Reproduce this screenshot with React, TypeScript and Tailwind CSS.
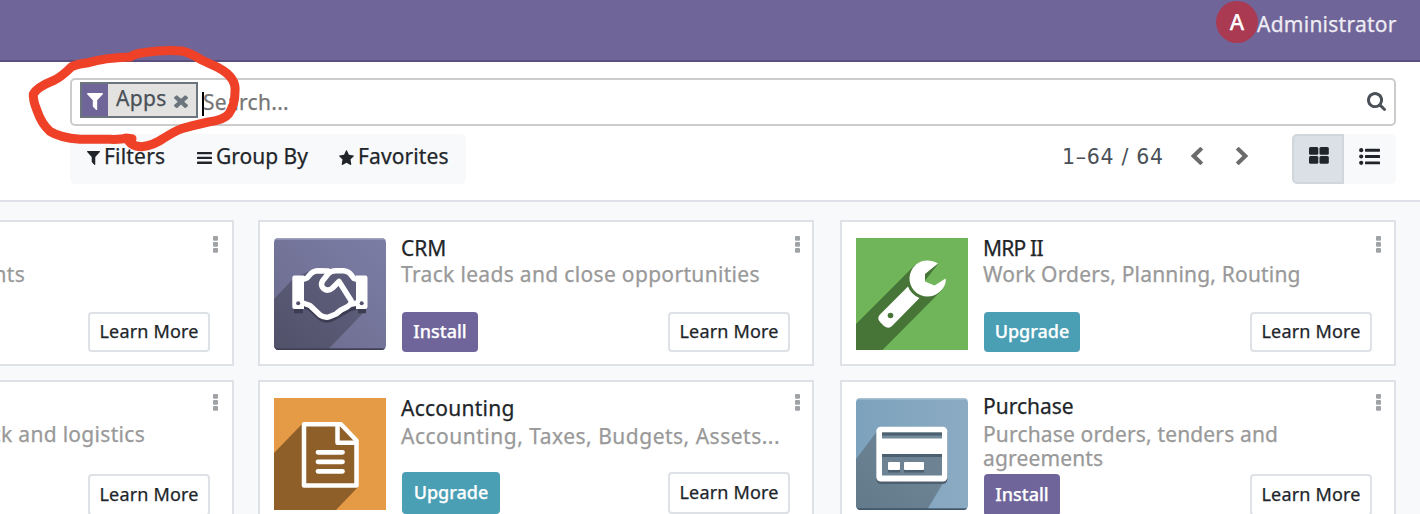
import React from "react";

type IconProps = { className: string; box: string; d: string };

function Icon({ className, box, d }: IconProps) {
  return (
    <svg viewBox={box} className={`shrink-0 ${className}`} fill="currentColor" preserveAspectRatio="none" aria-hidden="true">
      <path d={d} />
    </svg>
  );
}

const FILTER = "M1595 295q17 41-14 70l-493 493v742q0 42-39 59-13 5-25 5-27 0-45-19l-256-256q-19-19-19-45V858L211 365q-31-29-14-70 17-39 59-39h1280q42 0 59 39z";
const FILTER_BOX = "192 256 1408 1408";
const TIMES = "M1490 1322q0 40-28 68l-136 136q-28 28-68 28t-68-28l-294-294-294 294q-28 28-68 28t-68-28l-136-136q-28-28-28-68t28-68l294-294-294-294q-28-28-28-68t28-68l136-136q28-28 68-28t68 28l294 294 294-294q28-28 68-28t68 28l136 136q28 28 28 68t-28 68l-294 294 294 294q28 28 28 68z";
const STAR = "M1728 647q0 22-26 48l-363 354 86 500q1 7 1 20 0 21-10.5 35.5T1385 1619q-19 0-40-12l-449-236-449 236q-22 12-40 12-21 0-31.5-14.5T365 1569q0-6 2-20l86-500L89 695q-25-27-25-48 0-37 56-46l502-73L847 73q19-41 49-41t49 41l225 455 502 73q56 9 56 46z";
const SEARCH = "M1216 832q0-185-131.5-316.5T768 384 451.5 515.5 320 832t131.5 316.5T768 1280t316.5-131.5T1216 832zm512 832q0 52-38 90t-90 38q-54 0-90-38l-343-342q-179 124-399 124-143 0-273.5-55.5t-225-150-150-225T64 832t55.5-273.5 150-225 225-150T768 128t273.5 55.5 225 150 150 225T1472 832q0 220-124 399l343 343q37 37 37 90z";
const LEFT = "M1427 301l-531 531 531 531q19 19 19 45t-19 45l-166 166q-19 19-45 19t-45-19L429 877q-19-19-19-45t19-45l742-742q19-19 45-19t45 19l166 166q19 19 19 45t-19 45z";
const RIGHT = "M1363 877l-742 742q-19 19-45 19t-45-19l-166-166q-19-19-19-45t19-45l531-531-531-531q-19-19-19-45t19-45l166-166q19-19 45-19t45 19l742 742q19 19 19 45t-19 45z";

function Bars() {
  return (
    <svg viewBox="0 0 15 12" className="h-3 w-[15px] shrink-0" fill="currentColor" aria-hidden="true">
      <rect width="15" height="2.3" rx="0.6" />
      <rect y="4.8" width="15" height="2.3" rx="0.6" />
      <rect y="9.6" width="15" height="2.3" rx="0.6" />
    </svg>
  );
}

function CrmIcon() {
  return (
    <svg viewBox="0 0 112 112" className="size-28 shrink-0">
      <defs>
        <linearGradient id="crm" x1="0" y1="1" x2="1" y2="0">
          <stop offset="0" stopColor="#6a6b8b" />
          <stop offset="1" stopColor="#7c7da6" />
        </linearGradient>
        <linearGradient id="crmShade" x1="0" y1="1" x2="1" y2="0">
          <stop offset="0" stopColor="#51516a" />
          <stop offset="1" stopColor="#60607f" />
        </linearGradient>
        <clipPath id="crmClip"><rect width="112" height="112" rx="4.5" /></clipPath>
      </defs>
      <g clipPath="url(#crmClip)">
        <rect width="112" height="112" fill="url(#crm)" />
        <path d="M0 61 20 40 36 33 44 31 70 32 84 40 93 71 53.500 112H0Z" fill="url(#crmShade)" />
        <rect width="112" height="1.600" fill="#a2a3bf" />
        <rect y="110.300" width="112" height="1.700" fill="#3f4056" />
        <g transform="translate(0 2.500)" stroke="#3c3d52" strokeWidth="5.500" fill="none" strokeLinejoin="round">
          <path d="M29 65 36 67.500 46 77Q52 81.500 59 77.500L68 72.500 76 68 83 66M20 70h9M84 70h8" />
        </g>
        <g fill="none" stroke="#fff" strokeWidth="5.500" strokeLinejoin="round" strokeLinecap="round">
          <path d="M29 41.500 33 40 37 35.500Q40 32.700 44 32.700L54 33" />
          <path d="M83 41.500 80 40.500 76 35.500Q73 32.700 69 32.700H62Q57 32.700 54 36L48.500 43Q46 47 49.500 50.500 54 54 58.500 50L65 43.500 77 62.500Q78 66 73 69L67 72 62 76 56 78.500Q51 80.500 46 77L36 67.500 29 65M78 66 83 65" />
        </g>
        <path d="M20.500 37.500H30V71H20.500Q18.300 71 18.300 69V39.500Q18.300 37.500 20.500 37.500ZM82 37.500h9.300Q93.500 37.500 93.500 39.500V69Q93.500 71 91.300 71H82Z" fill="#fff" />
        <circle cx="24.200" cy="65.300" r="2" fill="#51526b" />
        <circle cx="87.700" cy="65.300" r="2" fill="#51526b" />
      </g>
    </svg>
  );
}

function AccountingIcon() {
  return (
    <svg viewBox="0 0 112 112" className="size-28 shrink-0">
      <rect width="112" height="112" fill="#e59b46" />
      <path d="M0 55 29 25H67L84 43V89L62 112H0Z" fill="#8f5f2a" />
      <path d="M30 26.300H67L82.500 42.500V87.500H30Z" fill="none" stroke="#fff" strokeWidth="4.500" strokeLinejoin="round" />
      <path d="M63.500 27V44.800H82" fill="none" stroke="#fff" strokeWidth="4.500" strokeLinejoin="round" />
      <path d="M44 54.300H68.500M44 63.800H68.500M44 73.300H68.500" stroke="#fff" strokeWidth="4.800" strokeLinecap="round" />
    </svg>
  );
}

function WrenchIcon() {
  return (
    <svg viewBox="0 0 112 112" className="size-28 shrink-0">
      <rect width="112" height="112" fill="#70b55a" />
      <path d="M0 86 59 27 82 26 68 44 86 52 26.500 112H0Z" fill="#477538" />
      <path d="M82 25.500C75 21.500 66 21 59.500 27 52 34 51.500 45 58 52.500 65 60 76 60.500 83.500 54 88.500 49.500 90.500 44.500 89.500 40.500L78.500 47.500 69 43.500V36Z" fill="#fff" />
      <path d="M52 48.500Q55 56.500 63.500 60L36 88Q32.500 91.500 28 88L24 84Q20.500 80 24 76.500Z" fill="#fff" />
      <circle cx="34.500" cy="77.500" r="2.800" fill="#477538" />
    </svg>
  );
}

function PurchaseIcon() {
  return (
    <svg viewBox="0 0 112 112" className="size-28 shrink-0">
      <defs>
        <linearGradient id="buy" x1="0" x2="1">
          <stop offset="0" stopColor="#7da2bd" />
          <stop offset="1" stopColor="#8babc2" />
        </linearGradient>
        <linearGradient id="buyShade" x1="0" y1="1" x2="1" y2="0">
          <stop offset="0" stopColor="#637a8b" />
          <stop offset="1" stopColor="#71889a" />
        </linearGradient>
        <clipPath id="buyClip"><rect width="112" height="112" rx="4.500" /></clipPath>
      </defs>
      <g clipPath="url(#buyClip)">
        <rect width="112" height="112" fill="url(#buy)" />
        <path d="M0 61 22 32 90 80 71 112H0Z" fill="url(#buyShade)" />
        <rect width="112" height="1.600" fill="#a8c0d1" />
        <rect y="110.300" width="112" height="1.700" fill="#41576a" />
        <rect x="20.300" y="31" width="71" height="55" rx="4.500" fill="#4d606f" />
        <rect x="20.300" y="28.700" width="71" height="54.800" rx="4.500" fill="#fff" />
        <rect x="26" y="34.500" width="60" height="6" fill="#738a9a" />
        <rect x="26" y="34.500" width="60" height="3" fill="#4d606f" />
        <rect x="26" y="56" width="60" height="21.500" fill="#6d8393" />
        <rect x="26" y="56" width="60" height="3" fill="#4d606f" />
        <rect x="32" y="66.500" width="12" height="8" rx="1" fill="#4d606f" />
        <rect x="48" y="66.500" width="20" height="8" rx="1" fill="#4d606f" />
        <rect x="32" y="64" width="12" height="8" rx="1" fill="#fff" />
        <rect x="48" y="64" width="20" height="8" rx="1" fill="#fff" />
      </g>
    </svg>
  );
}

function Kebab({ className }: { className: string }) {
  return (
    <svg viewBox="0 0 5 17" className={`ml-auto h-[17px] w-[5px] shrink-0 ${className}`} fill="#a0a3a6">
      <rect width="5" height="4.700" rx="1" />
      <rect y="6" width="5" height="4.700" rx="1" />
      <rect y="12" width="5" height="4.700" rx="1" />
    </svg>
  );
}

type CardProps = {
  icon?: React.ReactNode;
  title?: string;
  subtitle: React.ReactNode;
  action?: { label: string; className: string };
  titleClass?: string;
  subtitleClass?: string;
  rowClass: string;
  kebabClass: string;
  buttonClass: string;
  className?: string;
};

function Card({ icon, title, subtitle, action, titleClass = "", subtitleClass = "", rowClass, kebabClass, buttonClass, className = "" }: CardProps) {
  return (
    <article className={`flex h-[146px] w-[556px] shrink-0 border-2 border-[#dee1e6] bg-white pr-3 pl-[14px] pt-4 ${className}`}>
      {icon ?? <div className="size-28 shrink-0" />}
      <div className="ml-4 w-[388px] shrink-0">
        <div className={`-ml-px h-[25px] text-[21px] leading-[26px] text-[#212529] ${titleClass}`}>{title}</div>
        <div className={`-ml-px text-[21px] leading-6 whitespace-nowrap text-[#999] ${subtitleClass}`}>{subtitle}</div>
        <div className={`flex items-start justify-between ${rowClass}`}>
          {action ? (
            <button className={`rounded-[4px] pb-0.5 text-[18px] font-medium text-white ${buttonClass} ${action.className}`}>{action.label}</button>
          ) : (
            <span />
          )}
          <button className={`w-[122px] rounded-[4px] border-2 border-[#dee2e6] pb-0.5 text-[18px] tracking-[0.16px] text-[#212529] ${buttonClass}`}>Learn More</button>
        </div>
      </div>
      <Kebab className={kebabClass} />
    </article>
  );
}

export default function App() {
  return (
    <div className="relative h-[514px] w-[1420px] overflow-hidden bg-[#f8f9fb] font-['Noto_Sans',sans-serif] [-webkit-text-stroke:0.25px_currentColor]">
      <header className="flex h-[62px] items-start justify-end border-b-2 border-[#5a4f7f] bg-[#706599] pr-6">
        <div className="mt-[1px] flex size-[42px] items-center justify-center rounded-full bg-[#a93a51] pb-0.5 text-[22px] font-medium text-white">A</div>
        <span className="mt-3 -ml-[1px] w-[139px] text-[21px] leading-6 tracking-[0.25px] text-[#eeecf3]">Administrator</span>
      </header>

      <section className="h-[140px] border-b-2 border-[#dee1e8] bg-white pt-4 pr-6 pl-[70px]">
        <div className="flex h-12 items-start rounded-[5px] border-2 border-[#ccc] pl-2">
          <div className="mt-[2px] flex h-9 w-[118px] items-start border-2 border-[#6c757d] bg-[#e2e2e0]">
            <div className="flex h-8 w-[26px] justify-center bg-[#706599] pt-[9px] text-white">
              <Icon className="h-[17px] w-4" box={FILTER_BOX} d={FILTER} />
            </div>
            <span className="ml-2 w-[50px] text-[21px] leading-7 tracking-[0.3px] text-[#495057]">Apps</span>
            <Icon className="mt-[10px] ml-2 h-[14px] w-[14px] text-[#6c757d]" box="302 238 1188 1316" d={TIMES} />
          </div>
          <div className="mt-3 ml-1 h-6 w-[2px] bg-black" />
          <span className="mt-[9px] -ml-px text-[21px] leading-[26px] tracking-[0.3px] text-[#757575]">Search...</span>
          <Icon className="mt-3 mr-2 ml-auto size-[19px] text-[#495057]" box="64 128 1664 1664" d={SEARCH} />
        </div>

        <div className="mt-2 flex h-[50px] items-start">
          <nav className="flex h-[50px] w-[396px] rounded-[5px] bg-[#f8f9fb] pl-[17px] text-[21px] leading-[26px] text-[#212529]">
            <div className="flex w-[110px] pt-[9px] tracking-[0.2px]">
              <Icon className="mt-2 mr-1 h-[14px] w-[13px]" box={FILTER_BOX} d={FILTER} />
              Filters
            </div>
            <div className="flex w-[142px] pt-[9px]">
              <span className="mt-[9px] mr-1 flex items-start"><Bars /></span>
              Group By
            </div>
            <div className="flex pt-[9px] tracking-[0.12px]">
              <Icon className="mt-[7px] mr-1 h-[15px] w-[15px]" box="64 32 1664 1587" d={STAR} />
              Favorites
            </div>
          </nav>
          <div className="ml-auto flex items-start">
            <span className="mt-2.5 w-[129px] font-['DejaVu_Sans',sans-serif] text-[20.500px] leading-[26px] tracking-[0.700px] whitespace-nowrap text-[#495057] [-webkit-text-stroke:0]">1–64 / 64</span>
            <Icon className="mt-[13px] h-[18px] w-3 text-[#6b6b6b]" box="410 26 1036 1612" d={LEFT} />
            <Icon className="mt-[13px] ml-[33px] h-[18px] w-3 text-[#6b6b6b]" box="346 26 1036 1612" d={RIGHT} />
            <div className="ml-11 flex h-[50px] w-[52px] justify-center rounded-l-[5px] border-2 border-[#cfd6dc] bg-[#dae0e5] pt-[11px] pl-px">
              <svg viewBox="0 0 20 17" className="h-[17px] w-5" fill="#212529">
                <rect width="9.300" height="7.800" rx="1.500" />
                <rect x="10.500" width="9.300" height="7.800" rx="1.500" />
                <rect y="9" width="9.300" height="7.800" rx="1.500" />
                <rect x="10.500" y="9" width="9.300" height="7.800" rx="1.500" />
              </svg>
            </div>
            <div className="flex h-[50px] w-[52px] justify-center rounded-r-[5px] bg-[#f8f9fb] pt-[14px] pr-0.5">
              <svg viewBox="0 0 21 17" className="h-[17px] w-[21px]" fill="#212529">
                <circle cx="2.200" cy="2.200" r="2.100" />
                <circle cx="2.200" cy="8.500" r="2.100" />
                <circle cx="2.200" cy="14.800" r="2.100" />
                <rect x="6" y="0.800" width="15" height="2.900" rx="0.600" />
                <rect x="6" y="7.100" width="15" height="2.900" rx="0.600" />
                <rect x="6" y="13.400" width="15" height="2.900" rx="0.600" />
              </svg>
            </div>
          </div>
        </div>
      </section>

      <main className="-ml-[322px] flex flex-col gap-[14px] pt-[18px]">
        <div className="flex">
          <Card
            subtitle={<span className="flex w-[204px] justify-end tracking-[0.3px]">Invoices &amp; Payments</span>}
            titleClass="-mt-[2px] mb-px" rowClass="mt-[26px]" kebabClass="-mt-[2px] mr-[2px]" buttonClass="h-10"
          />
          <Card
            className="ml-6" icon={<CrmIcon />} title="CRM"
            subtitle="Track leads and close opportunities" subtitleClass="tracking-[0.330px]"
            action={{ label: "Install", className: "w-[76px] bg-[#6f659a]" }} titleClass="-mt-[3px] mb-[2px]" rowClass="mt-[26px]" kebabClass="-mt-[2px]" buttonClass="h-10"
          />
          <Card
            className="ml-[26px]" icon={<WrenchIcon />} title="MRP II"
            subtitle="Work Orders, Planning, Routing" subtitleClass="tracking-[0.180px]"
            action={{ label: "Upgrade", className: "w-24 bg-[#4a9fb5]" }} titleClass="-mt-[3px] mb-[2px] tracking-[-0.800px]" rowClass="mt-[26px]" kebabClass="-mt-[2px] mr-px" buttonClass="h-10"
          />
        </div>
        <div className="flex">
          <Card
            subtitle={<span className="flex w-[324px] justify-end tracking-[0.3px]">Manage your stock and logistics</span>}
            titleClass="-mt-[2px] mb-px" rowClass="mt-7" kebabClass="-mt-1 mr-[2px]" buttonClass="h-[42px]"
          />
          <Card
            className="ml-6" icon={<AccountingIcon />} title="Accounting"
            subtitle="Accounting, Taxes, Budgets, Assets..." subtitleClass="tracking-[0.500px]"
            action={{ label: "Upgrade", className: "w-[98px] bg-[#4a9fb5]" }} titleClass="-mt-[3px] mb-1 tracking-[0.250px]" rowClass="mt-6" kebabClass="-mt-1" buttonClass="h-[42px]"
          />
          <Card
            className="ml-[26px]" icon={<PurchaseIcon />} title="Purchase"
            subtitle={<>Purchase orders, tenders and<br />agreements</>} subtitleClass="tracking-[0.160px]"
            action={{ label: "Install", className: "w-[76px] bg-[#6f659a]" }} titleClass="-mt-[5px] mb-1" rowClass="mt-1" kebabClass="-mt-1 mr-px" buttonClass="h-[42px]"
          />
        </div>
      </main>

      <svg viewBox="0 0 900 495" className="pointer-events-none absolute top-10 left-5 h-[165px] w-[300px]" fill="none" aria-hidden="true">
        <path
          d="M336 296 318 294Q305 299 270 298L180 298Q120 293 90 274 65 252 52 214 38 180 40 162 50 142 104 120 125 110 155 80 170 72 205 68 250 54 330 51 345 40 370 38 440 28 485 33 510 38 545 60L595 83Q650 112 645 155 645 195 626 222 612 240 565 246 520 256 485 266 465 273 432 294 400 317 365 320 345 320 332 310L318 294"
          stroke="#ee4128" strokeWidth="27" strokeLinecap="round" strokeLinejoin="round"
        />
      </svg>
    </div>
  );
}
